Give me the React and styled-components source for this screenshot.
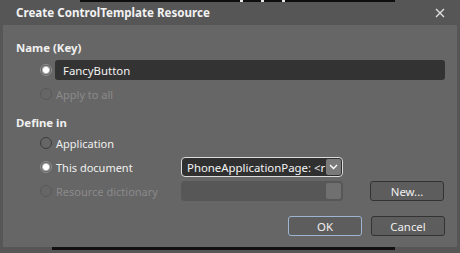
import React from 'react'
import styled, { createGlobalStyle } from 'styled-components'

const GlobalStyle = createGlobalStyle`
  html, body { margin: 0; padding: 0; background: #1c1c1c; }
  body { font-family: 'Noto Sans', 'Open Sans', sans-serif; }
  #root { width: 460px; height: 253px; overflow: hidden; }
`

const Window = styled.div`
  position: relative;
  width: 460px;
  height: 253px;
  display: flex;
  flex-direction: column;
  background: #1c1c1c;
`

const Behind = styled.div`
  position: absolute;
  top: 0;
  left: 80px;
  width: 315px;
  height: 2px;
  background: #0e0e0e;
  display: flex;
  gap: 18px;
  padding-left: 160px;
  box-sizing: border-box;
  span { width: 3px; height: 2px; background: #e8e8e8; }
`

const Frame = styled.div`
  flex: 1;
  display: flex;
  flex-direction: column;
  background: #565656;
  padding: 0 3px 3px 3px;
`

const TitleBar = styled.div`
  height: 25px;
  display: flex;
  align-items: center;
  justify-content: space-between;
  padding: 0 12px 0 13px;
  color: #f2f2f2;
  font-size: 11.6px;
  font-weight: 700;
`

const Close = styled.svg`
  width: 10px;
  height: 10px;
`

const Body = styled.div`
  flex: 1;
  background: #666666;
  padding: 15px 12px 0 13px;
  display: flex;
  flex-direction: column;
  font-size: 11px;
  color: #f0f0f0;
`

const SectionLabel = styled.div`
  height: 16px;
  line-height: 16px;
  font-size: 11.4px;
  font-weight: 700;
  margin-top: ${p => p.$top || 0}px;
`

const Rows = styled.div`
  display: flex;
  flex-direction: column;
  gap: 4px;
  margin-top: ${p => p.$top || 0}px;
  padding-left: 24px;
`

const Row = styled.div`
  height: 20px;
  display: grid;
  grid-template-columns: ${p => p.$cols || '1fr'};
  align-items: center;
  column-gap: ${p => p.$gap || 0}px;
`

const RadioLabel = styled.label`
  display: flex;
  align-items: center;
  gap: 4px;
  color: ${p => (p.$disabled ? '#8a8a8a' : '#f0f0f0')};
  white-space: nowrap;
`

const Circle = styled.span`
  width: 12px;
  height: 12px;
  box-sizing: border-box;
  border-radius: 50%;
  border: 1px solid ${p => (p.$disabled ? '#585858' : p.$checked ? '#909090' : '#3c3c3c')};
  background: ${p =>
    p.$checked
      ? 'radial-gradient(circle, #ffffff 0 2.6px, #c4c4c4 3.4px, #5e5e5e 4.6px)'
      : 'transparent'};
`

const TextInput = styled.div`
  height: 20px;
  background: #333333;
  border-radius: 3px;
  padding-left: 8px;
  display: flex;
  align-items: center;
  color: #f4f4f4;
  font-size: 11.4px;
`

const Select = styled.div`
  height: 20px;
  box-sizing: border-box;
  border: 1px solid ${p => (p.$disabled ? 'transparent' : '#dcdcdc')};
  background: ${p => (p.$disabled ? '#575757' : '#303030')};
  border-radius: 4px;
  display: flex;
  align-items: center;
  padding: 0 1px 0 5px;
  color: #f4f4f4;
  overflow: hidden;
  font-size: 11.4px;
`

const SelectText = styled.span`
  flex: 1;
  white-space: nowrap;
  overflow: hidden;
`

const DropButton = styled.span`
  width: 15px;
  height: 16px;
  border-radius: 2px;
  background: ${p => (p.$disabled ? '#707070' : '#7a7a7a')};
  display: flex;
  align-items: center;
  justify-content: center;
  flex-shrink: 0;
`

const Button = styled.div`
  height: 20px;
  box-sizing: border-box;
  border: 1px solid ${p => (p.$default ? '#9db5d2' : '#333333')};
  border-radius: 3px;
  background: #5d5d5d;
  color: #f0f0f0;
  display: flex;
  align-items: center;
  justify-content: center;
  font-size: 11.4px;
`

const Footer = styled.div`
  display: flex;
  justify-content: flex-end;
  gap: 9px;
  margin-top: 15px;
  ${Button} { width: 74px; }
`

const Bottom = styled.div`
  height: 3px;
  display: flex;
  background: #565656;
  span { margin-left: 49px; width: 343px; background: #111; }
`

function Radio({ checked, disabled, children }) {
  return (
    <RadioLabel $disabled={disabled}>
      <Circle $checked={checked} $disabled={disabled} />
      {children}
    </RadioLabel>
  )
}

export default function App() {
  return (
    <>
      <GlobalStyle />
      <Window>
        <Behind>
          <span /><span /><span />
        </Behind>
        <Frame>
          <TitleBar>
            <span>Create ControlTemplate Resource</span>
            <Close viewBox="0 0 10 10">
              <path d="M1 1 L9 9 M9 1 L1 9" stroke="#dedede" strokeWidth="1.4" />
            </Close>
          </TitleBar>
          <Body>
            <SectionLabel>Name (Key)</SectionLabel>
            <Rows $top={4}>
              <Row $cols="15px 1fr">
                <Circle $checked />
                <TextInput>FancyButton</TextInput>
              </Row>
              <Row>
                <Radio disabled>Apply to all</Radio>
              </Row>
            </Rows>
            <SectionLabel $top={11}>Define in</SectionLabel>
            <Rows $top={2}>
              <Row>
                <Radio>Application</Radio>
              </Row>
              <Row $cols="141px 162px 74px" $gap={0}>
                <Radio checked>This document</Radio>
                <Select>
                  <SelectText>PhoneApplicationPage: &lt;r</SelectText>
                  <DropButton>
                    <svg width="9" height="6" viewBox="0 0 9 6">
                      <path d="M1 1 L4.5 4.5 L8 1" stroke="#fff" strokeWidth="1.4" fill="none" />
                    </svg>
                  </DropButton>
                </Select>
              </Row>
              <Row $cols="141px 162px 27px 74px">
                <Radio disabled>Resource dictionary</Radio>
                <Select $disabled>
                  <SelectText />
                  <DropButton $disabled />
                </Select>
                <span />
                <Button>New...</Button>
              </Row>
            </Rows>
            <Footer>
              <Button $default>OK</Button>
              <Button>Cancel</Button>
            </Footer>
          </Body>
          <Bottom><span /></Bottom>
        </Frame>
      </Window>
    </>
  )
}
